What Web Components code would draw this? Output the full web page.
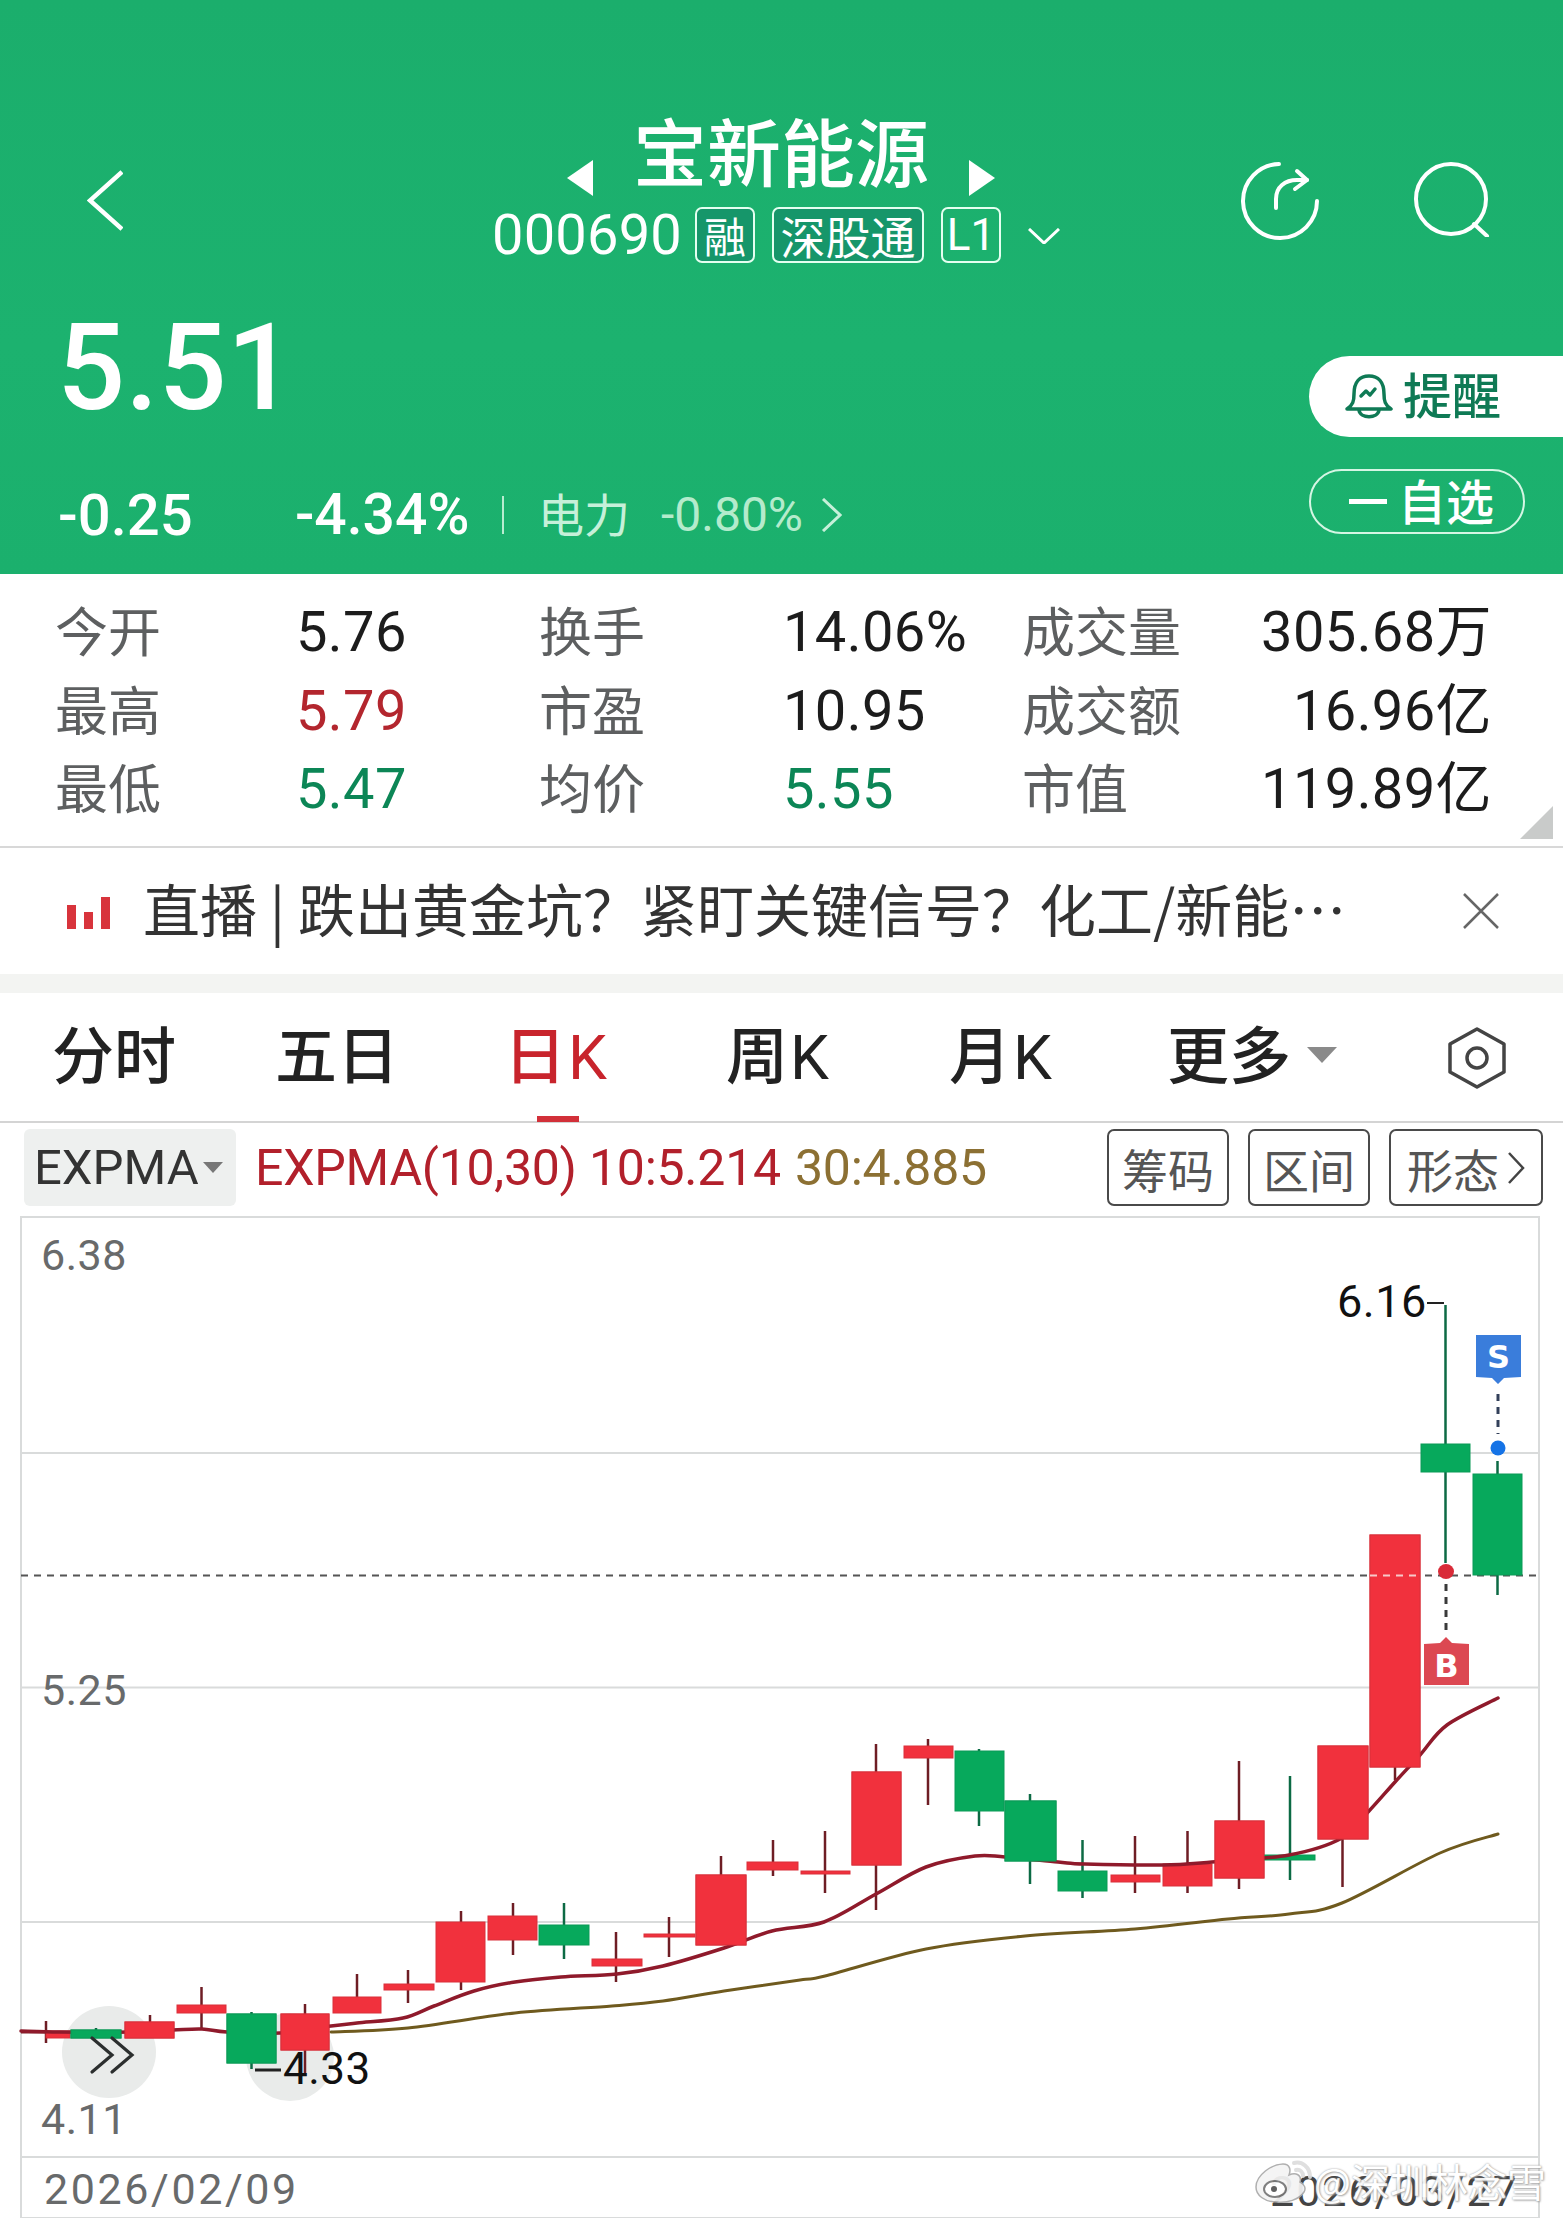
<!DOCTYPE html>
<html lang="zh"><head><meta charset="utf-8"><title>宝新能源</title>
<style>
html,body{margin:0;padding:0;background:#fff}
body{width:1563px;height:2218px;overflow:hidden;display:flex;flex-direction:column;font-family:Roboto,"Noto Sans CJK SC",sans-serif;color:#222}
</style></head><body>
<stock-header></stock-header>
<quote-stats></quote-stats>
<news-bar></news-bar>
<period-tabs></period-tabs>
<indicator-bar></indicator-bar>
<kline-chart></kline-chart>
<script>
function def(name,html,after){
  customElements.define(name,class extends HTMLElement{
    constructor(){super();this.attachShadow({mode:'open'}).innerHTML=html;if(after)after(this.shadowRoot)}
  });
}
def('stock-tag',`<style>:host{display:flex;align-items:center;justify-content:center;box-sizing:border-box;height:56px;border:2px solid #e4fff0;border-radius:7px;background:#16966a;color:#fff;font-size:45px;line-height:1;padding:0 2px;white-space:nowrap;font-family:"Noto Sans CJK SC",sans-serif}</style><slot></slot>`);
def('stock-header',`<style>
:host{display:block;height:574px;box-sizing:border-box;padding-top:120px;background:linear-gradient(180deg,#1bae6c,#1cb26f 60%,#1bb06d);color:#fff}
svg{display:block;flex:none}
.top{display:flex;height:143px}
.back{margin:50px 0 0 87px}
.center{margin-left:369px;width:570px;display:flex;flex-direction:column}
.title{display:flex;align-items:center;height:68px;padding-left:75px;gap:40px}
.title b{font-family:"Noto Sans CJK SC",sans-serif;font-weight:500;font-size:74px;line-height:68px;white-space:nowrap;width:296px;margin-top:-10px}
.title svg{margin-top:48px}
.code{display:flex;align-items:center;height:56px;margin-top:19px;font-size:0}
.num{font-size:56px;letter-spacing:.2px;width:203px;font-weight:400;line-height:56px;font-family:Roboto,sans-serif}
stock-tag+stock-tag{margin-left:17px}
.chev{margin-left:27px;margin-top:2px}
.refresh{margin:41px 0 0 177px}
.search{margin:41px 0 0 95px}
.main{display:flex;justify-content:space-between}
.left{padding-left:57px}
.price{font-size:120px;font-weight:500;line-height:85px;margin-top:63px;height:85px}
.chg{display:flex;align-items:center;height:44px;margin:82px 0 0 1px;font-size:58px;line-height:44px;white-space:nowrap;font-weight:500}
.chg span{display:block}
.a{width:237px}.b{width:207px;font-size:57px}
.sep{width:2px;height:38px;background:#b8ecd0;margin-right:34px}
.c{width:123px;font-family:"Noto Sans CJK SC",sans-serif;font-size:46px;color:#c6f0d9;font-weight:400;margin-top:-6px}
.d{width:160px;font-size:48px;color:#b4ebcc;font-weight:400}
.right{width:254px;padding-top:93px}
.remind{display:flex;align-items:center;height:81px;background:#fff;border-radius:41px 0 0 41px;box-sizing:border-box;padding-left:36px;gap:10px;font-family:"Noto Sans CJK SC",sans-serif;font-size:49px;color:#0f7a55;font-weight:500}
.remind span{margin-top:-8px}
.fav{display:flex;align-items:center;width:216px;height:65px;box-sizing:border-box;margin-top:32px;border:2px solid #d5f6e4;border-radius:33px;padding-left:38px;gap:11px;font-family:"Noto Sans CJK SC",sans-serif;font-size:48px;font-weight:500}
.fav span{margin-top:-6px}
.fav i{display:block;width:38px;height:5px;background:#fff}
</style>
<div class="top">
 <svg class="back" width="36" height="61" viewBox="0 0 36 61"><path d="M35 2 3 30.500 35 59" fill="none" stroke="#fff" stroke-width="4.500"/></svg>
 <div class="center">
  <div class="title">
   <svg width="26" height="36" viewBox="0 0 26 36"><path d="M26 0V36L0 18Z" fill="#fff"/></svg>
   <b>宝新能源</b>
   <svg width="26" height="36" viewBox="0 0 26 36"><path d="M0 0V36L26 18Z" fill="#fff"/></svg>
  </div>
  <div class="code">
   <span class="num">000690</span>
   <stock-tag style="width:60px;font-size:42px">融</stock-tag>
   <stock-tag style="width:152px">深股通</stock-tag>
   <stock-tag style="width:60px;background:none;font-family:Roboto;font-size:44px">L1</stock-tag>
   <svg class="chev" width="32" height="16" viewBox="0 0 32 16"><path d="M1 1 16 15 31 1" fill="none" stroke="#fff" stroke-width="3"/></svg>
  </div>
 </div>
 <svg class="refresh" width="80" height="80" viewBox="0 0 80 80" fill="none" stroke="#fff" stroke-width="4" stroke-linecap="round" stroke-linejoin="round"><path d="M40 3A37 37 0 1 0 78 40"/><path d="M37 47V38C37 26 46 19 58 19H68"/><path d="M58 10 68 19 56 28"/></svg>
 <svg class="search" width="76" height="76" viewBox="0 0 76 76" fill="none" stroke="#fff" stroke-width="4" stroke-linecap="round"><circle cx="37" cy="38" r="35"/><path d="M60 63 73 75"/></svg>
</div>
<div class="main">
 <div class="left">
  <div class="price">5.51</div>
  <div class="chg"><span class="a">-0.25</span><span class="b">-4.34%</span><span class="sep"></span><span class="c">电力</span><span class="d">-0.80%</span>
   <svg width="21" height="34" viewBox="0 0 21 34"><path d="M2 1 19 17 2 33" fill="none" stroke="#c6f0d9" stroke-width="3"/></svg></div>
 </div>
 <div class="right">
  <div class="remind"><svg width="48" height="46" viewBox="0 0 48 46" fill="none" stroke="#0f7a55" stroke-width="3.500" stroke-linejoin="round" stroke-linecap="round"><path d="M2 35C8 31 9 27 9 20C9 8 15 2 24 2S39 8 39 20C39 27 40 31 46 35Z"/><path d="M14 36C15 45 33 45 34 36"/><path d="M16 22 21 17 25 21 30 15"/></svg><span>提醒</span></div>
  <div class="fav"><i></i><span>自选</span></div>
 </div>
</div>`);
def('quote-stats',`<style>
:host{display:block;position:relative;box-sizing:border-box;height:274px;padding:19px 0 0 55px;border-bottom:2px solid #d8d8d8}
.g{display:grid;grid-template-columns:242px 242px 245px 238px 160px 310px;grid-auto-rows:78.500px;align-items:center;font-size:56px;line-height:78px;white-space:nowrap}
.l{font-family:"Noto Sans CJK SC",sans-serif;color:#5d5f60;font-size:53px;margin-top:-6px}
.v{color:#1c1c1c;letter-spacing:.4px;margin-left:-1px}
.e{text-align:right;margin-left:0}
.r{color:#b3262e}.n{color:#0c8656}
svg{position:absolute;right:10px;bottom:7px}
</style>
<div class="g">
<span class="l">今开</span><span class="v">5.76</span><span class="l">换手</span><span class="v">14.06%</span><span class="l">成交量</span><span class="v e">305.68万</span>
<span class="l">最高</span><span class="v r">5.79</span><span class="l">市盈</span><span class="v">10.95</span><span class="l">成交额</span><span class="v e">16.96亿</span>
<span class="l">最低</span><span class="v n">5.47</span><span class="l">均价</span><span class="v n">5.55</span><span class="l">市值</span><span class="v e">119.89亿</span>
</div>
<svg width="33" height="33" viewBox="0 0 33 33"><path d="M33 0V33H0Z" fill="#c9cbca"/></svg>`);
def('news-bar',`<style>
:host{display:block;border-bottom:19px solid #f3f4f2}
.b{display:flex;align-items:center;height:126px;font-family:"Noto Sans CJK SC",sans-serif;font-size:57px;color:#333;white-space:nowrap}
.ic{margin:4px 33px 0 67px;flex:none}
.t{width:1210px;overflow:hidden;margin-top:-8px}
.x{margin-left:110px;flex:none}
</style><div class="b">
<svg class="ic" width="43" height="32" viewBox="0 0 43 32" fill="#d8343c"><rect x="0" y="8" width="9" height="24"/><rect x="17" y="15" width="9" height="17"/><rect x="34" y="0" width="9" height="32"/></svg>
<span class="t">直播 | 跌出黄金坑？紧盯关键信号？化工/新能…</span>
<svg class="x" width="36" height="36" viewBox="0 0 36 36"><path d="M1 1 35 35M35 1 1 35" stroke="#666" stroke-width="2.500"/></svg>
</div>`);
def('period-tabs',`<style>
:host{display:block;box-sizing:border-box;height:130px;border-bottom:2px solid #d4d4d4}
.g{display:grid;grid-template-columns:223px 229px 222px 223px 218px 280px 60px;padding-left:52px;height:128px;align-items:center;font-size:62px;font-weight:500;color:#222;font-family:"Noto Sans CJK SC",sans-serif;white-space:nowrap}
.g>span{display:flex;align-items:baseline;position:relative;margin-top:-10px}
.g>span.hex{margin-top:2px}
.k{font-family:Roboto,sans-serif;font-weight:400;font-size:62px;margin-left:2px}
.on{color:#c8242c}
.on::after{content:"";position:absolute;left:33px;top:109px;width:42px;height:6px;background:#d23039}
svg{display:block}
.more svg{margin-left:16px;align-self:center;margin-top:6px}
</style><div class="g">
<span>分时</span><span>五日</span><span class="on">日<span class="k">K</span></span><span>周<span class="k">K</span></span><span>月<span class="k">K</span></span>
<span class="more">更多<svg width="30" height="16" viewBox="0 0 30 16"><path d="M0 0H30L15 16Z" fill="#8a8a8a"/></svg></span>
<span class="hex"><svg width="60" height="62" viewBox="0 0 60 62" fill="none" stroke="#444" stroke-width="3.500" stroke-linejoin="round"><path d="M30 2 57 17V45L30 60 3 45V17Z"/><circle cx="30" cy="31" r="10"/></svg></span>
</div>`);
def('chip-btn',`<style>:host{display:flex;align-items:center;justify-content:center;gap:8px;box-sizing:border-box;height:77px;border:2px solid #4a4a4a;border-radius:7px;font-family:"Noto Sans CJK SC",sans-serif;font-size:46px;color:#555}</style><slot></slot>`);
def('indicator-bar',`<style>
:host{display:flex;align-items:center;box-sizing:border-box;height:93px;padding:0 20px 3px 24px;white-space:nowrap}
.s{display:flex;align-items:center;width:212px;height:77px;box-sizing:border-box;background:#eef0ef;border-radius:6px;padding-left:10px;font-size:49px;color:#333;gap:4px;flex:none}
.t{margin-left:19px;font-size:50px;color:#b2202b;letter-spacing:-.25px;width:852px;flex:none}
.t em{font-style:normal;color:#8c7033;margin-left:2px}
.bs{display:grid;grid-template-columns:122px 122px 154px;gap:19px;flex:none}
</style>
<div class="s">EXPMA<svg width="20" height="11" viewBox="0 0 20 11"><path d="M0 0H20L10 11Z" fill="#777"/></svg></div>
<div class="t">EXPMA(10,30) 10:5.214 <em>30:4.885</em></div>
<div class="bs"><chip-btn>筹码</chip-btn><chip-btn>区间</chip-btn><chip-btn>形态<svg width="18" height="32" viewBox="0 0 18 32"><path d="M2 1 16 16 2 31" fill="none" stroke="#444" stroke-width="2.500"/></svg></chip-btn></div>`);

const C=[
[46,46,70,2030,2037,2020,2042,'r'],[96,71,121,2029,2037,2027,2037,'g'],[150,125,174,2021,2037,2014,2037,'r'],
[201.500,177,226,2004,2012,1986,2028,'r'],[251.500,227,276,2013,2062,2011,2068,'g'],[305,281,329,2013,2049,2003,2075,'r'],
[357,333,381,1996,2012,1973,2012,'r'],[408,384,434,1983,1989,1969,2002,'r'],[461,436,485,1921,1981,1910,1989,'r'],
[513,488,537,1915,1939,1902,1954,'r'],[564,539,589,1924,1944,1902,1958,'g'],[616,592,642,1958,1965,1931,1981,'r'],
[669,644,695,1933,1936,1916,1956,'r'],[721,696,746,1874,1944,1855,1944,'r'],[773,747,798,1861,1869,1839,1875,'r'],
[825,801,850,1870,1873,1830,1892,'r'],[876,852,901,1771,1864,1743,1909,'r'],[928,904,953,1745,1757,1738,1804,'r'],
[979,955,1004,1750,1810,1748,1825,'g'],[1030,1005,1056,1800,1860,1793,1883,'g'],[1082.500,1058,1107,1870,1890,1839,1897,'g'],
[1135,1111,1160,1874,1881,1835,1892,'r'],[1187.500,1163,1212,1863,1885,1830,1892,'r'],[1239,1215,1264,1820,1877,1760,1888,'r'],
[1290,1264,1315,1854,1859,1775,1879,'g'],[1342.500,1318,1368,1745,1838,1745,1886,'r'],[1395,1370,1420,1534,1766,1534,1779,'r'],
[1445.500,1421,1470,1443,1471,1304,1562,'g'],[1497.500,1473,1522,1473,1574,1460,1594,'g']];
const ema10=[[21,2030],[60,2031],[130,2031],[173,2029],[202,2028],[227,2031],[280,2032],[331,2025],[357,2022],[403,2017],[434,2005],[474,1990],[515,1981],[561,1976],[617,1973],[663,1965],[724,1947],[772,1930],[824,1921],[876,1893],[926,1866],[975,1855],[1005,1856],[1058,1861],[1085,1863],[1162,1864],[1212,1861],[1289,1854],[1342,1837],[1369,1810],[1395,1781],[1420,1754],[1447,1724],[1498,1697]];
const ema30=[[331,2031],[408,2027],[515,2012],[612,2005],[663,2000],[724,1990],[800,1979],[825,1975],[926,1948],[1025,1935],[1135,1928],[1228,1918],[1289,1913],[1342,1902],[1440,1852],[1498,1833]];
const smooth=p=>{let d='M'+p[0].join(' ');for(let i=0;i<p.length-1;i++){const a=p[Math.max(i-1,0)],b=p[i],c=p[i+1],e=p[Math.min(i+2,p.length-1)];d+=`C${b[0]+(c[0]-a[0])/6} ${b[1]+(c[1]-a[1])/6} ${c[0]-(e[0]-b[0])/6} ${c[1]-(e[1]-b[1])/6} ${c[0]} ${c[1]}`}return d};
const R='#f1313d',RS='#d9303b',G='#07a95c',GS='#0b9a56';
const body=([x,l,r,t,b,wt,wb,k])=>`<rect x="${l}" y="${t}" width="${r-l}" height="${b-t}" fill="${k==='r'?R:G}" stroke="${k==='r'?RS:GS}" stroke-width="1"/>`;
let wicks='';
for(const [x,l,r,t,b,wt,wb,k] of C) wicks+=`<path d="M${x} ${wt}V${wb}" stroke="${k==='r'?'#6e1d24':'#0c6a44'}" stroke-width="2.500"/>`;
const bodies=C.map(body).join('');
/* candles the average lines pass behind */
const over=[1,2,4,5,13,16,19,26,25,23].map(i=>body(C[i])).join('');
def('kline-chart',`<style>
:host{display:block;position:relative;height:1003px;overflow:hidden}
svg{display:block}
text{font-family:Roboto,"Noto Sans CJK SC",sans-serif}
.ax{font-size:43px;fill:#686a6b;letter-spacing:.5px}
.mk{font-size:45px;fill:#111;letter-spacing:.5px}
.sig{font-family:"DejaVu Sans",sans-serif;font-size:32px;font-weight:700;fill:#fff}
.wm{position:absolute;left:1250px;top:941px;display:flex;align-items:center;height:46px;font-family:"Noto Sans CJK SC",sans-serif;font-size:39px;color:#fff;text-shadow:0 0 2px #999,1px 1px 2px #aaa;white-space:nowrap;opacity:.93}
.wm svg{margin:0 -2px 0 0}
</style>
<svg width="1563" height="1003" viewBox="0 1215 1563 1003">
 <g fill="none" stroke="#d9dbdb" stroke-width="2">
  <path d="M21 1216H1539V2217H21Z"/><path d="M21 1452H1539M21 1686.500H1539M21 1921H1539M21 2156H1539"/>
 </g>
 <path d="M21 1574.500H1539" stroke="#555" stroke-width="1.800" stroke-dasharray="7 6" fill="none"/>
 <ellipse cx="109" cy="2051" rx="47" ry="46" fill="#e9ebea"/>
 <circle cx="290" cy="2056" r="44" fill="#e9ebea"/>
 <text class="ax" x="41" y="1269">6.38</text><text class="ax" x="41" y="1704">5.25</text><text class="ax" x="41" y="2133">4.11</text>
 <text class="ax" x="44" y="2203" style="letter-spacing:2.600px">2026/02/09</text>
 <text class="ax" x="1270" y="2205" style="fill:#444;letter-spacing:2px">2026/03/27</text>
 <path d="M21 2031H46" stroke="#7a1d25" stroke-width="3"/>
 <g>${wicks}</g>
 <g>${bodies}</g>
 <path d="${smooth(ema10)}" fill="none" stroke="#8f1a2b" stroke-width="3.500" stroke-linecap="round"/>
 <path d="${smooth(ema30)}" fill="none" stroke="#6f5a1e" stroke-width="3" stroke-linecap="round"/>
 <g>${over}</g>
 <path d="M1370 1574.500H1420" stroke="#f7c9c9" stroke-width="1.800" stroke-dasharray="7 6"/>
 <path d="M92 2037 112 2054 92 2071M112 2037 132 2054 112 2071" fill="none" stroke="#2c2f2f" stroke-width="3.200" stroke-linecap="round"/>
 <text class="mk" x="1337" y="1316">6.16</text><path d="M1427 1302H1444" stroke="#222" stroke-width="2"/>
 <text class="mk" x="283" y="2083" style="font-size:44px">4.33</text><path d="M255 2069H281" stroke="#222" stroke-width="3"/>
 <path d="M1498 1393V1433" stroke="#33405a" stroke-width="3" stroke-dasharray="7 6"/>
 <path d="M1476 1334H1521V1376L1504 1377 1498 1383 1492 1377 1476 1376Z" fill="#3a7ddb"/>
 <text class="sig" x="1498.500" y="1367" text-anchor="middle">S</text>
 <ellipse cx="1498" cy="1447" rx="7.500" ry="7.500" fill="#1573e6"/>
 <ellipse cx="1446" cy="1570.500" rx="8" ry="7.500" fill="#d92b38"/>
 <path d="M1446 1583V1634" stroke="#3a3a3a" stroke-width="3" stroke-dasharray="7 6"/>
 <path d="M1424 1643 1440 1642 1446 1636 1452 1642 1469 1643V1684H1424Z" fill="#dc4852"/>
 <text class="sig" x="1446.500" y="1676" text-anchor="middle">B</text>
</svg>
<div class="wm"><svg width="66" height="46" viewBox="0 0 66 46"><path d="M6 30C6 18 22 7 33 7C40 7 41 13 39 18C46 15 52 18 50 25C55 27 56 32 54 35C49 43 37 46 27 45C14 45 6 38 6 30Z" fill="#f4f4f4" stroke="#aaa" stroke-width="1.500"/><ellipse cx="25" cy="32" rx="11" ry="8" fill="#fff" stroke="#777" stroke-width="2"/><circle cx="24" cy="32" r="3" fill="#555"/><path d="M44 6C52 4 60 10 60 20M46 13C50 12 53 15 53 19" fill="none" stroke="#ddd" stroke-width="4" stroke-linecap="round"/></svg><span>@深圳林念雪</span></div>`);
</script>
</body></html>
